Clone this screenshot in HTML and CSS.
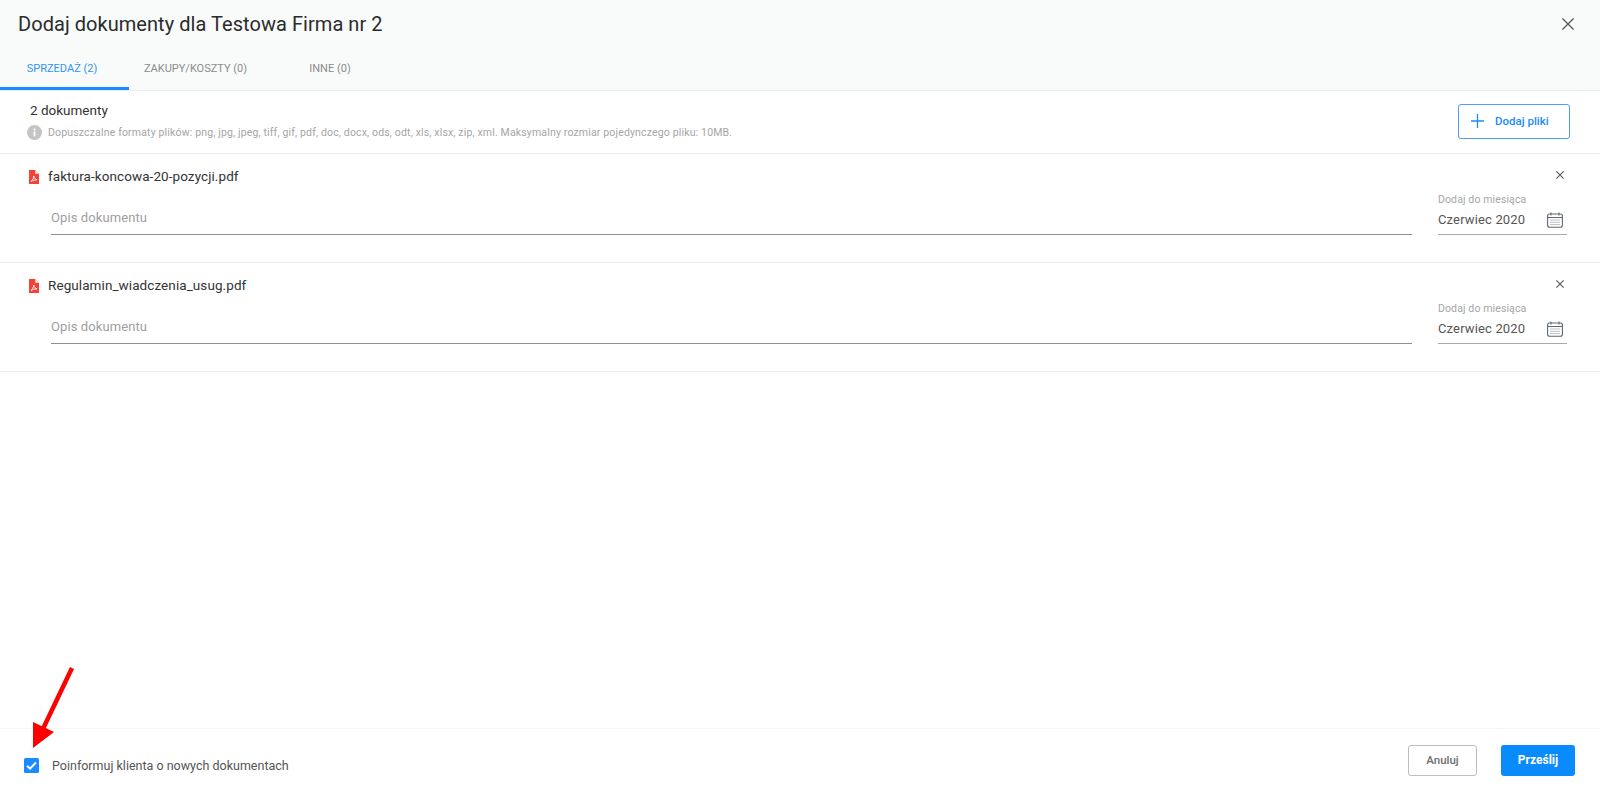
FILE: index.html
```html
<!DOCTYPE html>
<html lang="pl">
<head>
<meta charset="utf-8">
<title>Dodaj dokumenty</title>
<link rel="stylesheet" href="styles.css">
</head>
<body>
<div class="dialog">
  <header class="head">
    <div class="title-row">
      <h1 class="title">Dodaj dokumenty dla Testowa Firma nr 2</h1>
      <svg class="close-main" viewBox="0 0 12 12" width="12" height="12"><path d="M.5.5l11 11M11.500.5l-11 11" fill="none" stroke="#555" stroke-width="1.300"/></svg>
    </div>
    <nav class="tabs">
      <div class="tab active">SPRZEDAŻ (2)</div>
      <div class="tab tab-2">ZAKUPY/KOSZTY (0)</div>
      <div class="tab tab-3">INNE (0)</div>
    </nav>
  </header>
  <section class="info">
    <div class="info-text">
      <div class="count">2 dokumenty</div>
      <div class="hint">
        <svg class="hint-icon" viewBox="0 0 15 15" width="15" height="15"><circle cx="7.500" cy="7.500" r="7.500" fill="#c4c4c4"/><rect x="6.600" y="6.400" width="1.800" height="5" fill="#fff"/><rect x="6.600" y="3.600" width="1.800" height="1.800" fill="#fff"/></svg>
        <span>Dopuszczalne formaty plików: png, jpg, jpeg, tiff, gif, pdf, doc, docx, ods, odt, xls, xlsx, zip, xml. Maksymalny rozmiar pojedynczego pliku: 10MB.</span>
      </div>
    </div>
    <button class="add-btn">
      <svg viewBox="0 0 13 14" width="13" height="14"><path d="M6.500 0v14M0 7h13" stroke="#1a8cff" stroke-width="1.300" fill="none"/></svg>
      <span>Dodaj pliki</span>
    </button>
  </section>
  <section class="doc">
    <div class="doc-top">
      <svg class="pdf" viewBox="0 0 10 14" width="10" height="14"><path d="M0 0h6l4 4v10H0z" fill="#f44336"/><path d="M6.300 0.400l3.300 3.300H6.300z" fill="#fff"/><path d="M2 11.500c1.500-1 2.500-3 2.800-5.500.5 2.300 1.500 3.500 3.300 3.800-2.100 0-4.300.6-6.100 1.700z" fill="none" stroke="#fff" stroke-width=".9"/></svg>
      <span class="file">faktura-koncowa-20-pozycji.pdf</span>
      <svg class="close-doc" viewBox="0 0 8 8" width="8" height="8"><path d="M.4.4l7.200 7.200M7.600.4L.4 7.600" fill="none" stroke="#555" stroke-width="1.100"/></svg>
    </div>
    <div class="doc-fields">
      <div class="desc">Opis dokumentu</div>
      <div class="month">
        <div class="month-label">Dodaj do miesiąca</div>
        <div class="month-value">
          <span>Czerwiec 2020</span>
          <svg viewBox="0 0 16 16" width="16" height="16"><rect x=".6" y="2" width="14.800" height="13.300" rx="2" fill="none" stroke="#5f6870" stroke-width="1.100"/><path d="M.6 5.500h14.800M4 .5v3M12 .5v3" stroke="#5f6870" stroke-width="1.100" fill="none"/><path d="M3.500 8h9M3.500 10.300h9M3.500 12.600h9" stroke="#7a838a" stroke-width="1" stroke-dasharray="1 1" fill="none"/></svg>
        </div>
      </div>
    </div>
  </section>
  <section class="doc">
    <div class="doc-top">
      <svg class="pdf" viewBox="0 0 10 14" width="10" height="14"><path d="M0 0h6l4 4v10H0z" fill="#f44336"/><path d="M6.300 0.400l3.300 3.300H6.300z" fill="#fff"/><path d="M2 11.500c1.500-1 2.500-3 2.800-5.500.5 2.300 1.500 3.500 3.300 3.800-2.100 0-4.300.6-6.100 1.700z" fill="none" stroke="#fff" stroke-width=".9"/></svg>
      <span class="file">Regulamin_wiadczenia_usug.pdf</span>
      <svg class="close-doc" viewBox="0 0 8 8" width="8" height="8"><path d="M.4.4l7.200 7.200M7.600.4L.4 7.600" fill="none" stroke="#555" stroke-width="1.100"/></svg>
    </div>
    <div class="doc-fields">
      <div class="desc">Opis dokumentu</div>
      <div class="month">
        <div class="month-label">Dodaj do miesiąca</div>
        <div class="month-value">
          <span>Czerwiec 2020</span>
          <svg viewBox="0 0 16 16" width="16" height="16"><rect x=".6" y="2" width="14.800" height="13.300" rx="2" fill="none" stroke="#5f6870" stroke-width="1.100"/><path d="M.6 5.500h14.800M4 .5v3M12 .5v3" stroke="#5f6870" stroke-width="1.100" fill="none"/><path d="M3.500 8h9M3.500 10.300h9M3.500 12.600h9" stroke="#7a838a" stroke-width="1" stroke-dasharray="1 1" fill="none"/></svg>
        </div>
      </div>
    </div>
  </section>
  <div class="spacer"></div>
  <footer class="foot">
    <div class="check">
      <svg viewBox="0 0 15 15" width="15" height="15"><rect width="15" height="15" rx="1.500" fill="#1a8cff"/><path d="M3 7.800l3 2.800 6-6.100" fill="none" stroke="#fff" stroke-width="2"/></svg>
      <span>Poinformuj klienta o nowych dokumentach</span>
    </div>
    <div class="actions">
      <button class="btn-cancel">Anuluj</button>
      <button class="btn-send">Prześlij</button>
    </div>
  </footer>
</div>
<svg class="arrow" viewBox="0 0 80 90" width="80" height="90"><path d="M72 1L41 66" stroke="#fe0000" stroke-width="4.500" fill="none"/><path d="M33 81V55L54 65z" fill="#fe0000"/></svg>
</body>
</html>
```

FILE: styles.css
```css
* { box-sizing: border-box; }
html, body { margin: 0; height: 100%; background: #fff; overflow: hidden; }
body { font-family: Roboto, "Noto Sans", sans-serif; color: #2b2b2b; }
.dialog { height: 805px; display: flex; flex-direction: column; }

.head { height: 91px; background: #f9fbfb; border-bottom: 1px solid #eceeee; display: flex; flex-direction: column; }
.title-row { height: 47px; padding: 0 26px 0 18px; display: flex; align-items: center; justify-content: space-between; }
.title { margin: 0; font-size: 20px; font-weight: 400; letter-spacing: 0.05px; color: #2b2b2b; }
.tabs { display: flex; height: 43px; }
.tab { font-size: 11px; line-height: 36px; height: 43px; padding-top: 4px; color: #8b8b8b; text-align: center; }
.tab.active { width: 129px; padding-right: 5px; color: #2f94f5; border-bottom: 3px solid #1a8cff; }
.tab-2 { width: 120px; padding-left: 13px; }
.tab-3 { width: 90px; margin-left: 31px; padding-left: 10px; }

.info { height: 63px; border-bottom: 1px solid #eceeee; padding: 0 30px 0 27px; display: flex; align-items: center; justify-content: space-between; }
.info-text { display: flex; flex-direction: column; gap: 6px; padding-bottom: 3px; }
.count { font-size: 13.500px; line-height: 17px; padding-left: 3px; color: #333; }
.hint { display: flex; align-items: center; gap: 6px; font-size: 10.500px; line-height: 15px; color: #a5a5a5; letter-spacing: 0.16px; }
.hint-icon { flex: none; }

.add-btn { width: 112px; height: 35px; margin-bottom: 2px; background: #fff; border: 1px solid #4a9ff5; border-radius: 3px; display: flex; align-items: center; gap: 11px; padding: 0 0 0 12px; font: 500 11.500px Roboto, sans-serif; color: #1a8cff; }

.doc { height: 109px; border-bottom: 1px solid #eceeee; padding: 0 33px 0 29px; }
.doc-top { display: flex; align-items: center; height: 18px; margin-top: 13px; }
.pdf { flex: none; margin-right: 9px; margin-top: 2px; }
.file { font-size: 13.500px; letter-spacing: 0.08px; color: #333; }
.close-doc { margin-left: auto; margin-right: 3px; margin-top: -2px; }
.doc-fields { display: flex; align-items: flex-end; justify-content: space-between; height: 43px; margin-top: 7px; padding-left: 22px; }
.desc { flex: 1; height: 33px; border-bottom: 1px solid #8f8f8f; font-size: 13px; line-height: 32px; color: #a0a0a0; letter-spacing: 0.1px; }
.month { width: 129px; margin-left: 26px; }
.month-label { font-size: 10.500px; line-height: 15px; color: #a5a5a5; letter-spacing: 0.12px; }
.month-value { height: 28px; border-bottom: 1px solid #aaa; display: flex; align-items: center; justify-content: space-between; font-size: 13px; color: #555; letter-spacing: 0.15px; padding: 0 4px 2px 0; }

.spacer { flex: 1; }
.foot { height: 77px; border-top: 1px solid #f5f5f5; padding: 0 25px 0 24px; display: flex; align-items: center; justify-content: space-between; }
.check { display: flex; align-items: center; gap: 13px; font-size: 12.500px; color: #555; margin-bottom: 3px; }
.actions { display: flex; gap: 24px; margin-bottom: 14px; }
.btn-cancel { width: 69px; height: 31px; background: #fff; border: 1px solid #bdbdbd; border-radius: 3px; font: 500 11.500px Roboto, sans-serif; color: #6e6e6e; }
.btn-send { width: 74px; height: 31px; background: #0a8bfc; border: none; border-radius: 3px; font: 700 12px Roboto, sans-serif; color: #fff; }

.arrow { position: absolute; left: 0; top: 667px; pointer-events: none; }
```
